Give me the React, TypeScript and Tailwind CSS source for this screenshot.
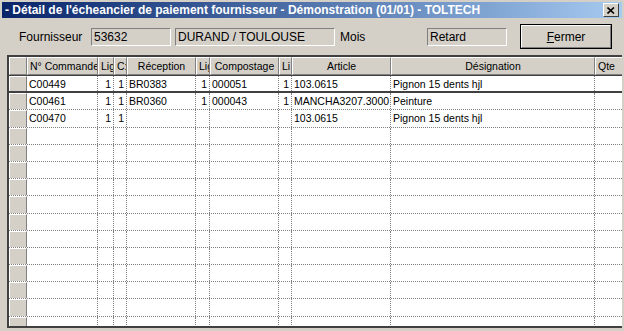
import React from 'react';

type Row = {
  cmd: string;
  lig: string;
  c: string;
  recep: string;
  lig2: string;
  compost: string;
  li: string;
  article: string;
  design: string;
};

const rows: Row[] = [
  { cmd: 'C00449', lig: '1', c: '1', recep: 'BR0383', lig2: '1', compost: '000051', li: '1', article: '103.0615', design: 'Pignon 15 dents hjl' },
  { cmd: 'C00461', lig: '1', c: '1', recep: 'BR0360', lig2: '1', compost: '000043', li: '1', article: 'MANCHA3207.3000', design: 'Peinture' },
  { cmd: 'C00470', lig: '1', c: '1', recep: '', lig2: '', compost: '', li: '', article: '103.0615', design: 'Pignon 15 dents hjl' },
];

const emptyRows = 12;

const cols = 'grid grid-cols-[18px_71px_16px_13px_69px_14px_69px_13px_99px_204px_60px]';
const cell = 'border-r border-dotted border-[#808080] overflow-hidden whitespace-nowrap px-[2px] leading-[16px]';
const num = cell + ' text-right';
const head =
  'border-t border-l border-t-white border-l-white border-r border-b border-r-[#808080] border-b-[#808080] overflow-hidden whitespace-nowrap leading-[16px] px-[2px]';

const Sunken: React.FC<{ w: string; children?: React.ReactNode }> = ({ w, children }) => (
  <div
    className={`${w} h-[18px] bg-[#d4d0c8] border-t border-l border-t-[#808080] border-l-[#808080] border-b border-r border-b-white border-r-white pl-[2px] leading-[16px] text-[12px] text-black whitespace-nowrap overflow-hidden`}
  >
    {children}
  </div>
);

export default function App() {
  return (
    <div className="w-[624px] h-[331px] bg-[#d4d0c8] overflow-hidden font-['Liberation_Sans',Arial,sans-serif] text-black">
      <div className="pt-[2px] px-[2px] flex flex-col h-full">
        {/* title bar */}
        <div className="h-[16px] flex items-center justify-between bg-gradient-to-r from-[#0a246a] to-[#a6caf0]">
          <span className="pl-[3px] text-white font-bold text-[12px] leading-[16px] whitespace-nowrap">
            - Détail de l'écheancier de paiement fournisseur - Démonstration (01/01) - TOLTECH
          </span>
          <div className="mr-[3px] w-[16px] h-[14px] bg-[#d4d0c8] border-t border-l border-t-white border-l-white border-b border-r border-b-[#404040] border-r-[#404040] flex items-center justify-center">
            <svg width="8" height="7" viewBox="0 0 8 7">
              <path d="M0.5 0.5 L7 6.5 M7 0.5 L0.5 6.5" stroke="black" strokeWidth="1.6" />
            </svg>
          </div>
        </div>

        {/* header panel */}
        <div className="h-[37px] flex items-center text-[12px]">
          <span className="ml-[17px] w-[72px]">Fournisseur</span>
          <Sunken w="w-[80px]">53632</Sunken>
          <div className="w-[4px]" />
          <Sunken w="w-[160px]">DURAND / TOULOUSE</Sunken>
          <span className="ml-[5px] w-[87px]">Mois</span>
          <Sunken w="w-[80px]">Retard</Sunken>
          <button className="ml-[13px] w-[92px] h-[25px] bg-[#d4d0c8] border border-black">
            <div className="h-full border-t border-l border-t-white border-l-white border-b border-r border-b-[#808080] border-r-[#808080] flex items-center justify-center text-[12px]">
              <span>
                <span className="underline">F</span>ermer
              </span>
            </div>
          </button>
        </div>

        {/* grid */}
        <div className="ml-[5px] flex-1 border-t-2 border-l-2 border-[#404040] border-b-2 border-b-[#404040] bg-white overflow-hidden mb-[3px] text-[10.5px]">
          <div className={cols + ' h-[19px] bg-[#d4d0c8] border-b border-[#404040]'}>
            <div className={head} />
            <div className={head}>N° Commande</div>
            <div className={head}>Lig</div>
            <div className={head}>C:</div>
            <div className={head + ' text-center'}>Réception</div>
            <div className={head}>Lig</div>
            <div className={head + ' text-center'}>Compostage</div>
            <div className={head}>Li</div>
            <div className={head + ' text-center'}>Article</div>
            <div className={head + ' text-center'}>Désignation</div>
            <div className={head}>Qte</div>
          </div>

          {rows.map((r, i) => (
            <div
              key={r.cmd}
              className={
                cols +
                ' h-[17.2px] ' +
                (i === 0 ? 'border-b-2 border-[#404040]' : 'border-b border-dotted border-[#808080]')
              }
            >
              <div className="bg-[#d4d0c8] border-t border-l border-t-white border-l-white border-r border-r-[#808080]" />
              <div className={cell}>{r.cmd}</div>
              <div className={num}>{r.lig}</div>
              <div className={num}>{r.c}</div>
              <div className={cell}>{r.recep}</div>
              <div className={num}>{r.lig2}</div>
              <div className={cell}>{r.compost}</div>
              <div className={num}>{r.li}</div>
              <div className={cell}>{r.article}</div>
              <div className={cell}>{r.design}</div>
              <div className={cell} />
            </div>
          ))}

          {Array.from({ length: emptyRows }).map((_, i) => (
            <div key={i} className={cols + ' h-[17.2px] border-b border-dotted border-[#808080]'}>
              <div className="bg-[#d4d0c8] border-t border-l border-t-white border-l-white border-r border-r-[#808080]" />
              <div className={cell} />
              <div className={cell} />
              <div className={cell} />
              <div className={cell} />
              <div className={cell} />
              <div className={cell} />
              <div className={cell} />
              <div className={cell} />
              <div className={cell} />
              <div className={cell} />
            </div>
          ))}
        </div>
      </div>
    </div>
  );
}
